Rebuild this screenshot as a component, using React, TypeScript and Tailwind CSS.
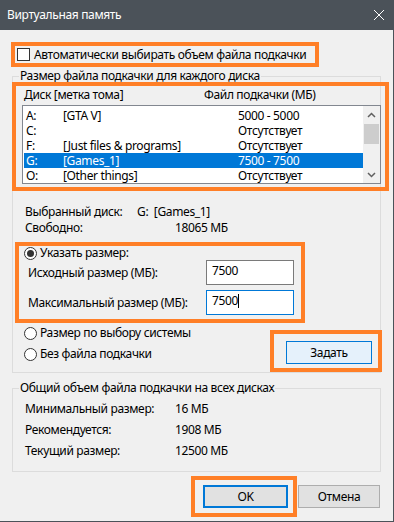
import React from 'react';

const font = { fontFamily: '"Noto Sans", "Open Sans", sans-serif' };

type Drive = { letter: string; label: string; size: string; selected?: boolean };

const drives: Drive[] = [
  { letter: 'A:', label: '[GTA V]', size: '5000 - 5000' },
  { letter: 'C:', label: '', size: 'Отсутствует' },
  { letter: 'F:', label: '[Just files & programs]', size: 'Отсутствует' },
  { letter: 'G:', label: '[Games_1]', size: '7500 - 7500', selected: true },
  { letter: 'O:', label: '[Other things]', size: 'Отсутствует' },
];

const Radio: React.FC<{ checked?: boolean; label: string }> = ({ checked, label }) => (
  <div className="flex items-center h-[14px] ml-[11px]">
    <span className="w-[13px] h-[13px] rounded-full border border-[#333333] bg-white flex items-center justify-center">
      {checked && <span className="w-[7px] h-[7px] rounded-full bg-[#333333]" />}
    </span>
    <span className="ml-[3px] leading-[16px] whitespace-nowrap">{label}</span>
  </div>
);

const Chevron: React.FC<{ up?: boolean }> = ({ up }) => (
  <svg width="9" height="6" viewBox="0 0 9 6">
    <path
      d={up ? 'M1 5 L4.5 1.5 L8 5' : 'M1 1 L4.5 4.5 L8 1'}
      fill="none"
      stroke="#606060"
      strokeWidth="1.5"
    />
  </svg>
);

const Legend: React.FC<{ text: string }> = ({ text }) => (
  <span className="block w-fit -mt-[9px] ml-[6px] px-[1px] leading-[16px] bg-[#f0f0f0] whitespace-nowrap">
    {text}
  </span>
);

const Mark: React.FC<{ className: string }> = ({ className }) => (
  <div className={`absolute border-4 border-[#ff7f27] pointer-events-none ${className}`} />
);

export default function App() {
  return (
    <div
      className="relative w-[394px] h-[522px] bg-[#f0f0f0] border-r border-b border-[#4b5259] text-[12px] tracking-[-0.35px] text-black overflow-hidden"
      style={font}
    >
      {/* title bar */}
      <div className="h-[30px] bg-[#4b5259] flex items-center justify-between pl-[7px] pr-[8px]">
        <span className="text-white leading-[16px]">Виртуальная память</span>
        <svg width="12" height="12" viewBox="0 0 12 12">
          <path d="M1 1 L11 11 M11 1 L1 11" stroke="#ffffff" strokeWidth="1" />
        </svg>
      </div>

      {/* auto checkbox */}
      <div className="flex items-center h-[13px] mt-[18px] ml-[17px]">
        <span className="w-[13px] h-[13px] border border-[#333333] bg-white" />
        <span className="ml-[4px] leading-[16px] whitespace-nowrap">Автоматически выбирать объем файла подкачки</span>
      </div>

      {/* per-disk group */}
      <div className="ml-[12px] mt-[15px] w-[369px] h-[297px] border border-[#dcdcdc]">
        <Legend text="Размер файла подкачки для каждого диска" />

        <div className="flex mt-[3px] pl-[11px] leading-[16px]">
          <span className="w-[180px]">Диск [метка тома]</span>
          <span>Файл подкачки (МБ)</span>
        </div>

        <div className="flex mt-[2px] ml-[9px] w-[359px] h-[79px] border border-[#828790] bg-white">
          <div className="flex-1 pt-[2px] pl-[1px]">
            {drives.map((d) => (
              <div
                key={d.letter}
                className={`flex items-center h-[15px] pl-[2px] leading-[14px] ${
                  d.selected ? 'bg-[#0078d7] text-white' : ''
                }`}
              >
                <span className="w-[37px]">{d.letter}</span>
                <span className="w-[175px] whitespace-nowrap">{d.label}</span>
                <span>{d.size}</span>
              </div>
            ))}
          </div>
          <div className="w-[17px] bg-[#f0f0f0] flex flex-col">
            <div className="h-[18px] flex items-center justify-center">
              <Chevron up />
            </div>
            <div className="h-[20px] mx-[1px] bg-[#cdcdcd]" />
            <div className="flex-1" />
            <div className="h-[17px] flex items-center justify-center">
              <Chevron />
            </div>
          </div>
        </div>

        <div className="flex mt-[20px] pl-[12px] leading-[16px]">
          <span className="w-[112px]">Выбранный диск:</span>
          <span className="whitespace-pre">G:  [Games_1]</span>
        </div>
        <div className="flex pl-[12px] leading-[16px]">
          <span className="w-[150px]">Свободно:</span>
          <span>18065 МБ</span>
        </div>

        <div className="mt-[10px]">
          <Radio checked label="Указать размер:" />
        </div>

        <div className="flex items-center h-[25px] pl-[15px]">
          <span className="w-[178px]">Исходный размер (МБ):</span>
          <div className="w-[88px] h-[25px] border border-[#7a7a7a] bg-white pl-[5px] pt-[2px] leading-[16px]">
            7500
          </div>
        </div>
        <div className="flex items-center h-[25px] mt-[5px] pl-[15px]">
          <span className="w-[178px]">Максимальный размер (МБ):</span>
          <div className="w-[88px] h-[25px] border border-[#0078d7] bg-white pl-[5px] pt-[2px] leading-[16px] flex items-start">
            <span>7500</span>
            <span className="w-[1px] h-[14px] bg-black mt-[1px]" />
          </div>
        </div>

        <div className="flex justify-between items-start">
          <div className="flex flex-col">
            <div className="mt-[11px]">
              <Radio label="Размер по выбору системы" />
            </div>
            <div className="mt-[7px]">
              <Radio label="Без файла подкачки" />
            </div>
          </div>
          <button className="mt-[26px] mr-[8px] w-[86px] h-[23px] border border-[#0078d7] bg-[#e5f1fb] leading-[16px]">
            Задать
          </button>
        </div>
      </div>

      {/* totals group */}
      <div className="ml-[12px] mt-[15px] w-[369px] h-[84px] border border-[#dcdcdc]">
        <Legend text="Общий объем файла подкачки на всех дисках" />
        <div className="mt-[2px]">
          {[
            ['Минимальный размер:', '16 МБ'],
            ['Рекомендуется:', '1908 МБ'],
            ['Текущий размер:', '12500 МБ'],
          ].map(([k, v]) => (
            <div key={k} className="flex h-[21px] leading-[21px] pl-[12px]">
              <span className="w-[150px]">{k}</span>
              <span>{v}</span>
            </div>
          ))}
        </div>
      </div>

      {/* dialog buttons */}
      <div className="flex justify-end gap-[10px] mt-[13px] mr-[13px]">
        <button className="w-[85px] h-[23px] border-2 border-[#0078d7] bg-[#e1e1e1] leading-[16px]">OK</button>
        <button className="w-[82px] h-[23px] border border-[#adadad] bg-[#e1e1e1] leading-[16px]">Отмена</button>
      </div>

      {/* highlight marks */}
      <Mark className="left-[11px] top-[42px] w-[308px] h-[25px]" />
      <Mark className="left-[12px] top-[82px] w-[377px] h-[109px]" />
      <Mark className="left-[15px] top-[242px] w-[290px] h-[81px]" />
      <Mark className="left-[270px] top-[330px] w-[112px] h-[42px]" />
      <Mark className="left-[191px] top-[476px] w-[106px] h-[41px]" />
    </div>
  );
}
